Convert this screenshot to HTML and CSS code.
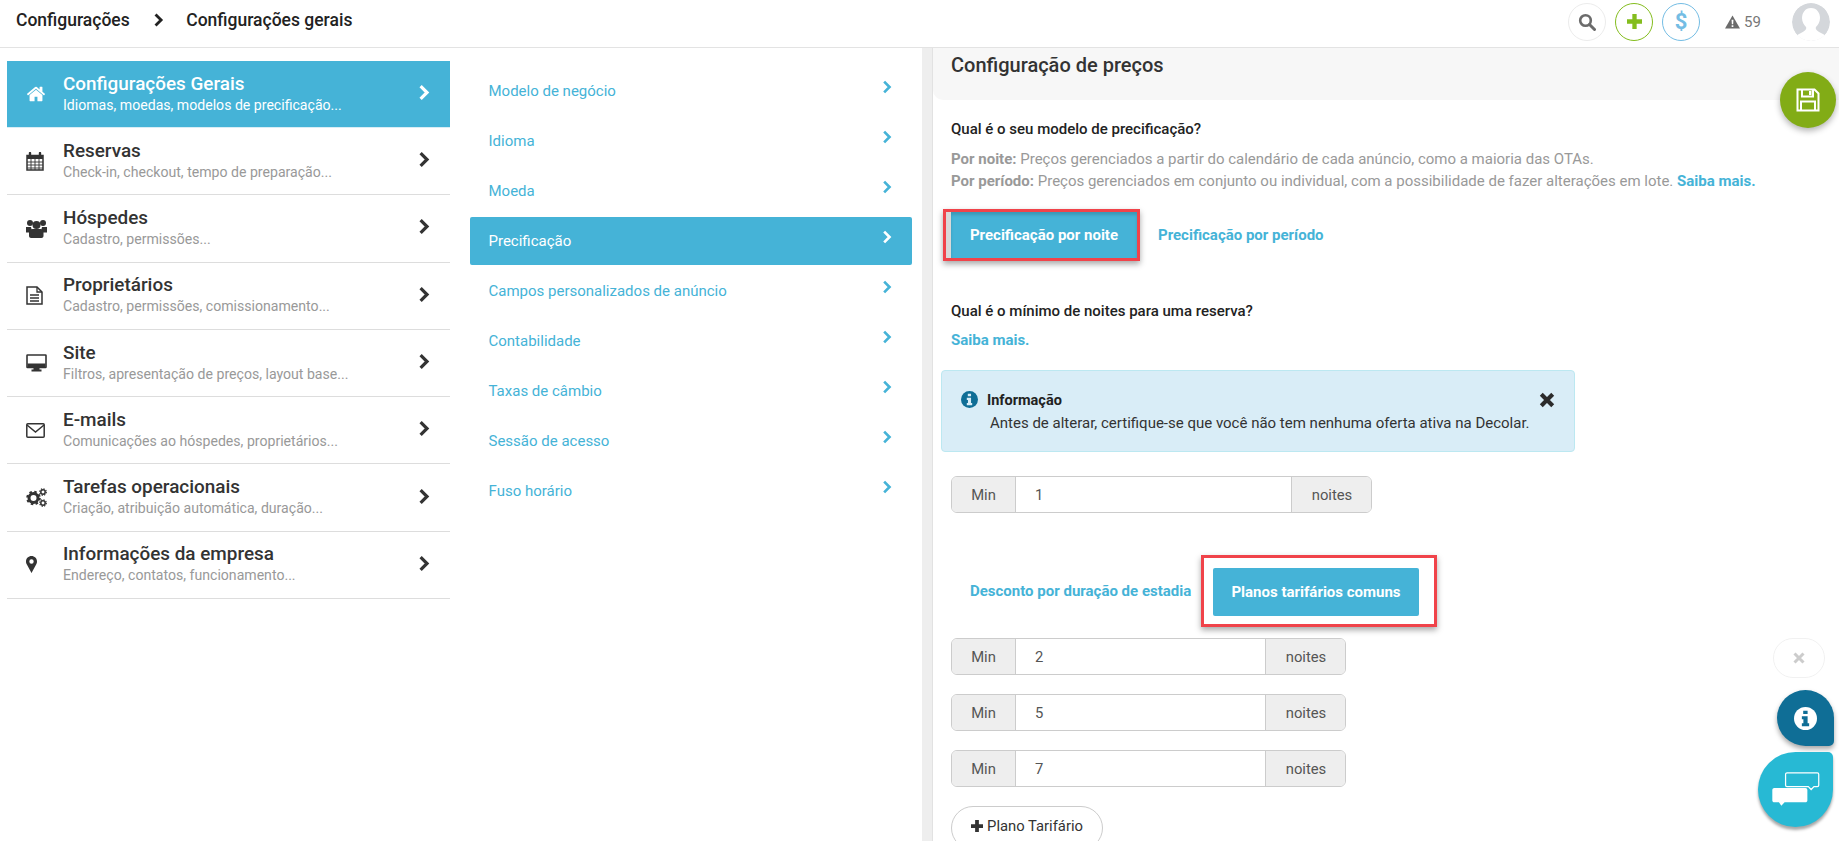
FILE: index.html
```html
<!DOCTYPE html>
<html lang="pt-BR">
<head>
<meta charset="utf-8">
<title>Configurações gerais</title>
<link rel="stylesheet" href="styles.css">
</head>
<body>
<svg class="defs" width="0" height="0" aria-hidden="true">
  <symbol id="chev" viewBox="0 0 12 16"><path d="M2.6 1.6 9 8l-6.4 6.4" fill="none" stroke="currentColor" stroke-width="3.2"/></symbol>
  <symbol id="info" viewBox="0 0 24 24"><circle cx="12" cy="12" r="12" fill="currentColor"/><path class="info-i" d="M9.6 3.8h4.6v3.6H9.6zM8.2 9.6h6v7.4h1.6v3.2H8.2V17h1.6v-4.2H8.2z"/></symbol>
</svg>

<header class="topbar">
  <nav class="crumbs">
    <span>Configurações</span>
    <svg class="crumb-chev"><use href="#chev"/></svg>
    <span>Configurações gerais</span>
  </nav>
  <div class="actions">
    <span class="round round-search">
      <svg viewBox="0 0 18 18" width="18" height="18"><circle cx="7.5" cy="7.5" r="5.3" fill="none" stroke="#6b6b6b" stroke-width="2.6"/><path d="m11.5 11.5 5 5" stroke="#6b6b6b" stroke-width="3" stroke-linecap="round"/></svg>
    </span>
    <span class="round round-plus">
      <svg viewBox="0 0 16 16" width="15" height="15"><path d="M5.7 0h4.6v5.7H16v4.6h-5.7V16H5.7v-5.7H0V5.7h5.7z" fill="#84bd1e"/></svg>
    </span>
    <span class="round round-dollar">$</span>
    <span class="alerts">
      <svg viewBox="0 0 16 14" width="15" height="14"><path d="M8 0 16 14H0z" fill="#6b6b6b"/><path d="M7 4.5h2l-.3 5H7.3zM7.1 10.5h1.8v1.8H7.1z" fill="#fff"/></svg>
      <span>59</span>
    </span>
    <span class="avatar">
      <svg viewBox="0 0 38 38" width="38" height="38"><circle cx="19" cy="19" r="19" fill="#d4d7db"/><path d="M19 5c6 0 9 5 9 10 0 4-2 7-4 9-1 2 1 4 5 6 2 1 4 2 5 3-4 3-9 5-15 5S8 36 4 33c1-1 3-2 5-3 4-2 6-4 5-6-2-2-4-5-4-9 0-5 3-10 9-10z" fill="#fff"/></svg>
    </span>
  </div>
</header>

<main class="layout">
  <aside class="menu">
    <a class="menu-item is-active">
      <svg class="menu-icon" viewBox="0 0 1792 1792" width="20" height="20"><path fill="currentColor" d="M1472 992v480q0 26-19 45t-45 19h-384v-384h-256v384h-384q-26 0-45-19t-19-45v-480q0-1 .5-3t.5-3l575-474 575 474q1 2 1 6zm223-69-62 74q-8 9-21 11h-3q-13 0-21-7l-692-577-692 577q-12 8-24 7-13-2-21-11l-62-74q-8-10-7-23.5t11-21.5l719-599q32-26 76-26t76 26l244 204v-195q0-14 9-23t23-9h192q14 0 23 9t9 23v408l219 182q10 8 11 21.5t-7 23.5z"/></svg>
      <span class="menu-text"><b>Configurações Gerais</b><small>Idiomas, moedas, modelos de precificação...</small></span>
      <svg class="menu-chev"><use href="#chev"/></svg>
    </a>
    <a class="menu-item">
      <svg class="menu-icon" viewBox="0 0 18 19" width="18" height="19"><path d="M1 3.5h16v14.500H1z" fill="none" stroke="currentColor" stroke-width="1.500"/><path d="M1 3h16v4H1z" fill="currentColor"/><path d="M4 1v4M14 1v4" stroke="currentColor" stroke-width="2.400" stroke-linecap="round"/><path d="M1 10h16M1 13h16M1 16h16M5 7v11M9 7v11M13 7v11" stroke="currentColor" stroke-width=".9"/></svg>
      <span class="menu-text"><b>Reservas</b><small>Check-in, checkout, tempo de preparação...</small></span>
      <svg class="menu-chev"><use href="#chev"/></svg>
    </a>
    <a class="menu-item">
      <svg class="menu-icon" viewBox="0 0 21 19" width="21" height="19"><circle cx="4" cy="4" r="3" fill="currentColor"/><circle cx="17" cy="4" r="3" fill="currentColor"/><circle cx="10.500" cy="6" r="4" fill="currentColor"/><path d="M0 8h5l1 4-2 1.500H0zM21 8h-5l-1 4 2 1.500h4z" fill="currentColor"/><path d="M3 13c0-2 2-3 3.500-3h8c1.500 0 3 1 3 3v4c0 1-1 2-2 2h-10.500c-1 0-2-1-2-2z" fill="currentColor"/></svg>
      <span class="menu-text"><b>Hóspedes</b><small>Cadastro, permissões...</small></span>
      <svg class="menu-chev"><use href="#chev"/></svg>
    </a>
    <a class="menu-item">
      <svg class="menu-icon" viewBox="0 0 17 19" width="17" height="19"><path d="M1 1h10l5 5v12H1z" fill="none" stroke="currentColor" stroke-width="1.500"/><path d="M11 1v5h5M4 9h9M4 12h9M4 15h9" fill="none" stroke="currentColor" stroke-width="1.300"/></svg>
      <span class="menu-text"><b>Proprietários</b><small>Cadastro, permissões, comissionamento...</small></span>
      <svg class="menu-chev"><use href="#chev"/></svg>
    </a>
    <a class="menu-item">
      <svg class="menu-icon" viewBox="0 0 21 18" width="21" height="18"><path d="M1.500 1h18c.3 0 .5.200.5.500V13c0 .3-.2.500-.5.500h-18c-.3 0-.5-.2-.5-.500V1.500c0-.3.200-.5.500-.5z" fill="none" stroke="currentColor" stroke-width="1.600"/><path d="M1.500 9.500h18v4h-18zM7.500 13.500h6v2h2v2h-10v-2h2z" fill="currentColor"/></svg>
      <span class="menu-text"><b>Site</b><small>Filtros, apresentação de preços, layout base...</small></span>
      <svg class="menu-chev"><use href="#chev"/></svg>
    </a>
    <a class="menu-item">
      <svg class="menu-icon" viewBox="0 0 19 15" width="19" height="15"><rect x=".8" y=".8" width="17.400" height="13.400" rx="1" fill="none" stroke="currentColor" stroke-width="1.500"/><path d="m1 2 8.500 7L18 2" fill="none" stroke="currentColor" stroke-width="1.500"/></svg>
      <span class="menu-text"><b>E-mails</b><small>Comunicações ao hóspedes, proprietários...</small></span>
      <svg class="menu-chev"><use href="#chev"/></svg>
    </a>
    <a class="menu-item">
      <svg class="menu-icon" viewBox="0 0 21 19" width="21" height="19"><circle cx="7.500" cy="10" r="4.500" fill="none" stroke="currentColor" stroke-width="3"/><circle cx="7.500" cy="10" r="6.300" fill="none" stroke="currentColor" stroke-width="2" stroke-dasharray="2.500 2.450"/><circle cx="17" cy="4" r="2.200" fill="none" stroke="currentColor" stroke-width="1.500"/><circle cx="17" cy="4" r="3.300" fill="none" stroke="currentColor" stroke-width="1.200" stroke-dasharray="1.300 1.300"/><circle cx="17" cy="15" r="2.200" fill="none" stroke="currentColor" stroke-width="1.500"/><circle cx="17" cy="15" r="3.300" fill="none" stroke="currentColor" stroke-width="1.200" stroke-dasharray="1.300 1.300"/></svg>
      <span class="menu-text"><b>Tarefas operacionais</b><small>Criação, atribuição automática, duração...</small></span>
      <svg class="menu-chev"><use href="#chev"/></svg>
    </a>
    <a class="menu-item">
      <svg class="menu-icon" viewBox="0 0 11 17" width="11" height="17"><path fill-rule="evenodd" d="M5.500 0C8.500 0 11 2.400 11 5.400c0 1.400-.4 2.300-1 3.400L5.500 17 1 8.800C.4 7.700 0 6.800 0 5.400 0 2.400 2.500 0 5.500 0zm0 3.300a2.200 2.200 0 1 0 0 4.400 2.200 2.200 0 0 0 0-4.400z" fill="currentColor"/></svg>
      <span class="menu-text"><b>Informações da empresa</b><small>Endereço, contatos, funcionamento...</small></span>
      <svg class="menu-chev"><use href="#chev"/></svg>
    </a>
  </aside>

  <nav class="submenu">
    <a class="sub-item"><span>Modelo de negócio</span><svg class="sub-chev"><use href="#chev"/></svg></a>
    <a class="sub-item"><span>Idioma</span><svg class="sub-chev"><use href="#chev"/></svg></a>
    <a class="sub-item"><span>Moeda</span><svg class="sub-chev"><use href="#chev"/></svg></a>
    <a class="sub-item is-active"><span>Precificação</span><svg class="sub-chev"><use href="#chev"/></svg></a>
    <a class="sub-item"><span>Campos personalizados de anúncio</span><svg class="sub-chev"><use href="#chev"/></svg></a>
    <a class="sub-item"><span>Contabilidade</span><svg class="sub-chev"><use href="#chev"/></svg></a>
    <a class="sub-item"><span>Taxas de câmbio</span><svg class="sub-chev"><use href="#chev"/></svg></a>
    <a class="sub-item"><span>Sessão de acesso</span><svg class="sub-chev"><use href="#chev"/></svg></a>
    <a class="sub-item"><span>Fuso horário</span><svg class="sub-chev"><use href="#chev"/></svg></a>
  </nav>

  <section class="panel">
    <h1 class="panel-title">Configuração de preços</h1>
    <div class="panel-body">
      <h2 class="question q-first">Qual é o seu modelo de precificação?</h2>
      <p class="hint"><b>Por noite:</b> Preços gerenciados a partir do calendário de cada anúncio, como a maioria das OTAs.<br><b>Por período:</b> Preços gerenciados em conjunto ou individual, com a possibilidade de fazer alterações em lote. <a class="link">Saiba mais.</a></p>

      <div class="tabs tabs-pricing">
        <span class="mark mark-pricing"><span class="btn-stripe"></span><span class="btn btn-pricing">Precificação por noite</span></span>
        <a class="link tab-link-after">Precificação por período</a>
      </div>

      <h2 class="question q-second">Qual é o mínimo de noites para uma reserva?</h2>
      <a class="link link-block">Saiba mais.</a>

      <div class="alert">
        <svg class="alert-icon" width="17" height="17"><use href="#info"/></svg>
        <div class="alert-text">
          <b>Informação</b>
          <span>Antes de alterar, certifique-se que você não tem nenhuma oferta ativa na Decolar.</span>
        </div>
        <svg class="alert-close" viewBox="0 0 14 14" width="16" height="16"><path d="m2 2 10 10M12 2 2 12" stroke="#2b2b2b" stroke-width="3.600"/></svg>
      </div>

      <div class="group group-wide"><span class="addon addon-min">Min</span><span class="field">1</span><span class="addon addon-unit">noites</span></div>

      <div class="tabs tabs-rates">
        <a class="link tab-link-before">Desconto por duração de estadia</a>
        <span class="mark mark-rates"><span class="btn btn-rates">Planos tarifários comuns</span></span>
      </div>

      <div class="group"><span class="addon addon-min">Min</span><span class="field">2</span><span class="addon addon-unit">noites</span></div>
      <div class="group"><span class="addon addon-min">Min</span><span class="field">5</span><span class="addon addon-unit">noites</span></div>
      <div class="group"><span class="addon addon-min">Min</span><span class="field">7</span><span class="addon addon-unit">noites</span></div>

      <button class="add-btn"><svg viewBox="0 0 16 16" width="12" height="12"><path d="M5.500 0h5v5.500H16v5h-5.500V16h-5v-5.500H0v-5h5.500z" fill="#333"/></svg> Plano Tarifário</button>
    </div>
  </section>
</main>

<button class="fab-save" aria-label="Salvar">
  <svg viewBox="0 0 24 24" width="24" height="24"><path d="M1.500 1.500h17l4 4v17h-21z" fill="none" stroke="#fff" stroke-width="2"/><path d="M6 1.500v7h11v-7M5 22.500v-9h14v9" fill="none" stroke="#fff" stroke-width="2"/><path d="M13 3h2.500v4H13z" fill="#fff"/></svg>
</button>
<span class="float-close">
  <svg viewBox="0 0 12 12" width="12" height="12"><path d="m1.500 1.500 9 9M10.500 1.500l-9 9" stroke="#ccc" stroke-width="3"/></svg>
</span>
<span class="float-info"><svg width="23" height="23"><use href="#info"/></svg></span>
<span class="float-chat">
  <svg viewBox="0 0 50 38" width="48" height="36"><path d="M14 2.500c0-1 .8-1.500 1.500-1.500h32c1 0 1.500.7 1.500 1.500V14c0 1-.7 1.500-1.500 1.500H44l-3 3-3-3H15.500c-1 0-1.500-.7-1.500-1.500z" fill="none" stroke="#fff" stroke-width="1.300"/><path d="M2 17h33c1 0 2 1 2 2v11c0 1-1 2-2 2H13l-3.500 3.500L7 32H2c-1 0-2-1-2-2V19c0-1 1-2 2-2z" fill="#fff"/></svg>
</span>
</body>
</html>
```
FILE: styles.css
```css
* { box-sizing: border-box; }
html, body { height: 100%; }
body {
  margin: 0;
  height: 841px;
  overflow: hidden;
  background: #fff;
  color: #333;
  font-family: Roboto, "Liberation Sans", sans-serif;
  font-size: 15px;
}
a { text-decoration: none; }
.defs { position: absolute; }

.topbar {
  height: 48px;
  display: flex;
  align-items: center;
  justify-content: space-between;
  border-bottom: 1px solid #e3e3e3;
  padding: 0 9px 4px 16px;
}
.crumbs {
  display: flex;
  align-items: center;
  color: #222;
  font-size: 17.5px;
  font-weight: 500;
  margin-bottom: 3px;
}
.crumb-chev { width: 11px; height: 14px; margin: 0 22.5px 0 23px; color: #222; }
.actions { display: flex; align-items: center; }
.round {
  width: 38px;
  height: 38px;
  border-radius: 50%;
  display: flex;
  align-items: center;
  justify-content: center;
  margin-right: 9px;
}
.round-search { border: 1px solid #ececec; }
.round-plus { border: 1px solid #84bd1e; }
.round-dollar { border: 1px solid #74bde4; color: #74bde4; font-size: 22px; font-weight: 700; margin-right: 25px; }
.alerts { display: flex; align-items: center; gap: 4px; color: #777; font-size: 15px; width: 67px; }
.avatar { width: 38px; height: 38px; border-radius: 50%; overflow: hidden; }

.layout {
  display: grid;
  grid-template-columns: 450px 472px 1fr;
  height: 793px;
}

.menu { padding: 13px 0 0 7px; }
.menu-item {
  height: 67.3px;
  display: grid;
  grid-template-columns: 37px 1fr auto;
  align-items: center;
  border-bottom: 1px solid #ddd;
  color: #333;
  padding: 0 20px 0 19px;
}
.menu-item.is-active { background: #45b3d7; color: #fff; border-bottom-color: #d8edf5; height: 67px; }
.menu-text { display: flex; flex-direction: column; margin-top: -1px; }
.menu-text b { font-size: 18.9px; font-weight: 500; line-height: 22px; }
.menu-text small { font-size: 14.1px; line-height: 19px; color: #999; margin-top: 1px; }
.is-active .menu-text small { color: #fff; }
.menu-chev { width: 12px; height: 17px; color: #333; margin-top: -3px; }
.is-active .menu-chev { color: #fff; }

.submenu { padding: 19px 10px 0 20px; display: flex; flex-direction: column; gap: 2px; }
.sub-item {
  height: 48px;
  display: flex;
  align-items: center;
  justify-content: space-between;
  padding: 0 20px 0 18.5px;
  color: #45b3d7;
  font-size: 15px;
  border-radius: 2px;
}
.sub-item.is-active { background: #45b3d7; color: #fff; }
.sub-chev { width: 10px; height: 14px; color: #45b3d7; margin-top: -8px; }
.is-active .sub-chev { color: #fff; }

.panel { background: #fff; border-left: 10px solid #eee; box-shadow: inset 1px 0 0 #e2e2e2; min-width: 0; height: 793px; overflow: hidden; }
.panel-title {
  margin: 0 0 0 1px;
  height: 52px;
  padding: 5px 0 0 18px;
  background: #f7f7f7;
  border-bottom-left-radius: 10px;
  color: #333;
  font-size: 20px;
  font-weight: 500;
  line-height: 24px;
}
.panel-body { padding-left: 19px; }
.question { margin: 0; font-size: 15px; font-weight: 500; line-height: 20px; color: #222; }
.q-first { margin-top: 19px; }
.q-second { margin-top: 40px; }
.hint { margin: 9px 0 0; color: #999; line-height: 22px; }
.hint b { font-weight: 700; }
.link { color: #45b3d7; font-weight: 700; font-size: 15px; }
.link-block { display: block; line-height: 20px; margin-top: 9px; }

.tabs { display: flex; align-items: center; }
.tabs-pricing { margin: 17px 0 0 -8px; }
.mark {
  border: 3px solid #f0434a;
  box-shadow: 0 3px 6px rgba(0,0,0,.35);
  display: flex;
}
.mark-pricing { width: 197px; height: 52px; align-items: stretch; }
.btn-stripe { width: 5px; background: #d9d9d9; }
.btn { background: #45b3d7; color: #fff; font-weight: 700; display: flex; align-items: center; justify-content: center; border-radius: 2px; }
.btn-pricing { flex: 1; box-shadow: inset 0 3px 3px rgba(0,0,0,.15); border-radius: 0; }
.tab-link-after { margin-left: 18px; }

.alert {
  margin: 20px 0 0 -10px;
  width: 634px;
  height: 82px;
  background: #d9edf7;
  border: 1px solid #bce8f1;
  border-radius: 4px;
  display: flex;
  align-items: flex-start;
  padding: 18px 19px 0 19px;
}
.alert-icon { color: #0f6e96; --i: #d9edf7; flex: none; margin-top: 2px; }
.info-i { fill: var(--i, #fff); }
.alert-text { flex: 1; margin-left: 9px; line-height: 23px; display: flex; flex-direction: column; color: #333; }
.alert-text b { font-weight: 700; font-size: 14.5px; color: #222; }
.alert-text span { margin-left: 3px; }
.alert-close { margin: 3px 0 0 0; }

.group {
  width: 395px;
  height: 37px;
  display: flex;
  margin-top: 19px;
  border: 1px solid #ccc;
  border-radius: 6px;
  overflow: hidden;
  color: #555;
  font-size: 14.8px;
}
.group-wide { width: 421px; margin-top: 24px; }
.tabs + .group { margin-top: 11px; }
.addon { background: #eee; display: flex; align-items: center; justify-content: center; flex: none; }
.addon-min { width: 64px; border-right: 1px solid #ccc; }
.addon-unit { width: 80px; border-left: 1px solid #ccc; padding-left: 1px; }
.field { flex: 1; display: flex; align-items: center; padding-left: 19px; background: #fff; }

.tabs-rates { margin: 42px 0 0 19px; height: 72px; }
.tab-link-before { width: 231px; }
.mark-rates { width: 236px; height: 72px; padding: 10px 15px 8px 9px; }
.btn-rates { flex: 1; }

.add-btn {
  display: flex;
  align-items: center;
  gap: 4px;
  justify-content: center;
  margin-top: 19px;
  width: 152px;
  height: 44px;
  background: #fff;
  border: 1px solid #ccc;
  border-radius: 22px;
  color: #333;
  font: 14.8px Roboto, "Liberation Sans", sans-serif;
  padding: 0 0 5px;
}

.fab-save {
  position: fixed;
  left: 1780px;
  top: 72px;
  width: 56px;
  height: 56px;
  border: 0;
  padding: 0;
  border-radius: 50%;
  background: #82ac16;
  box-shadow: 0 3px 6px rgba(0,0,0,.3);
  display: flex;
  align-items: center;
  justify-content: center;
}
.float-close {
  position: fixed;
  left: 1773px;
  top: 638px;
  width: 52px;
  height: 40px;
  border: 1px solid #f1f1f1;
  border-radius: 20px;
  display: flex;
  align-items: center;
  justify-content: center;
}
.float-info {
  position: fixed;
  left: 1777px;
  top: 690px;
  width: 57px;
  height: 56px;
  border-radius: 50% 50% 5px 50%;
  background: #0f6e96;
  color: #fff;
  --i: #0f6e96;
  box-shadow: 0 3px 5px rgba(0,0,0,.35);
  display: flex;
  align-items: center;
  justify-content: center;
}
.float-chat {
  position: fixed;
  left: 1758px;
  top: 752px;
  width: 75px;
  height: 75px;
  border-radius: 50% 5px 50% 50%;
  background: #27b9d4;
  box-shadow: 0 3px 3px rgba(0,0,0,.35);
  display: flex;
  align-items: center;
  justify-content: center;
}
```
